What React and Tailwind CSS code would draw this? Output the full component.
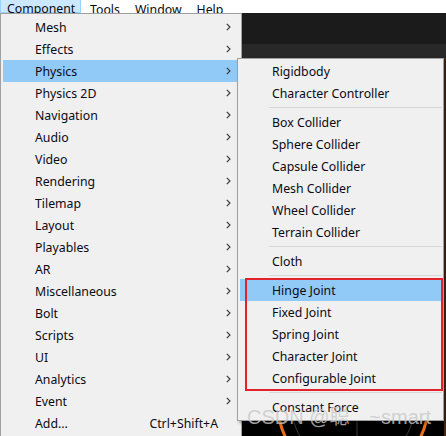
import React from "react";

const mainItems = [
  "Mesh", "Effects", "Physics", "Physics 2D", "Navigation", "Audio", "Video",
  "Rendering", "Tilemap", "Layout", "Playables", "AR", "Miscellaneous", "Bolt",
  "Scripts", "UI", "Analytics", "Event",
];

const subGroups = [
  ["Rigidbody", "Character Controller"],
  ["Box Collider", "Sphere Collider", "Capsule Collider", "Mesh Collider", "Wheel Collider", "Terrain Collider"],
  ["Cloth"],
  ["Hinge Joint", "Fixed Joint", "Spring Joint", "Character Joint", "Configurable Joint"],
  ["Constant Force"],
];

const Chevron = () => (
  <svg width="5" height="8" viewBox="0 0 5 8" className="shrink-0">
    <polyline points="0.8,0.8 4,4 0.8,7.2" fill="none" stroke="#333" strokeWidth="1.1" />
  </svg>
);

const Row = ({ label, active, arrow, shortcut }) => (
  <div className={`flex items-center h-[22px] pl-[32px] pr-[8px] ${active ? "bg-[#91c9f7]" : ""}`}>
    <span className="flex-1 whitespace-nowrap pt-[2px]">{label}</span>
    {shortcut && <span className="whitespace-nowrap mr-[13px] pt-[2px]">{shortcut}</span>}
    {arrow && <Chevron />}
  </div>
);

export default function App() {
  return (
    <div
      className="relative w-[446px] h-[436px] overflow-hidden bg-black text-[12.3px] text-[#0a0a14]"
      style={{ fontFamily: '"Noto Sans", "Noto Sans CJK SC", sans-serif' }}
    >
      {/* menu bar */}
      <div className="flex items-end h-[13px] bg-white overflow-hidden leading-[16px] gap-[14px]">
        <div className="w-[81px] h-[13px] shrink-0 bg-[#cce8ff] border border-t-0 border-[#99d1ff] pl-[6px] flex items-end">
          <span className="-mb-[5px]">Component</span>
        </div>
        <span className="-ml-[5px] -mb-[5px]">Tools</span>
        <span className="ml-[1px] -mb-[5px]">Window</span>
        <span className="ml-[1px] -mb-[5px]">Help</span>
      </div>

      {/* editor background */}
      <div className="h-[31px] bg-[#1b1b1b]" />
      <div className="h-[14px] bg-[#282828]" />
      <div className="absolute right-0 top-[58px] w-[2px] h-[378px] bg-[#4a2a14]" />
      <svg className="absolute left-0 top-0" width="446" height="436">
        <circle cx="353" cy="404" r="62" fill="none" stroke="#3a3a3a" strokeWidth="1" />
        <line x1="357" y1="421" x2="357" y2="436" stroke="#3a3a3a" />
        <circle cx="353" cy="404" r="75" fill="none" stroke="#e8701a" strokeWidth="3" />
      </svg>

      {/* main menu */}
      <div className="absolute left-0 top-[13px] w-[242px] h-[440px] bg-[#f0f0f0] border border-[#a0a0a0] p-[2px]">
        {mainItems.map((m) => (
          <Row key={m} label={m} active={m === "Physics"} arrow />
        ))}
        <Row label="Add..." shortcut="Ctrl+Shift+A" />
      </div>

      {/* physics submenu */}
      <div className="absolute left-[237px] top-[58px] w-[207px] h-[363px] bg-[#f0f0f0] border border-[#a0a0a0] pl-[2px] pr-[1px] py-[1px] shadow-[2px_2px_3px_rgba(0,0,0,0.35)]">
        {subGroups.map((g, i) => (
          <div key={i}>
            {i > 0 && (
              <div className="h-[7px] pt-[3px] pl-[29px]">
                <div className="h-[1px] bg-[#d7d7d7]" />
              </div>
            )}
            {g.map((s) => (
              <Row key={s} label={s} active={s === "Hinge Joint"} />
            ))}
          </div>
        ))}
      </div>

      {/* annotation */}
      <div className="absolute left-[245px] top-[278px] w-[198px] h-[113px] border-2 border-[#e3222b]" />

      {/* watermark */}
      <div
        className="absolute left-[247px] top-[405px] w-[184px] flex justify-between text-[20px] leading-[24px] text-[#c8c8c8]/80 whitespace-nowrap"
        style={{ fontFamily: '"Liberation Sans", "Noto Sans CJK SC", sans-serif' }}
      >
        <span>CSDN @聪</span>
        <span>~smart</span>
      </div>
    </div>
  );
}
